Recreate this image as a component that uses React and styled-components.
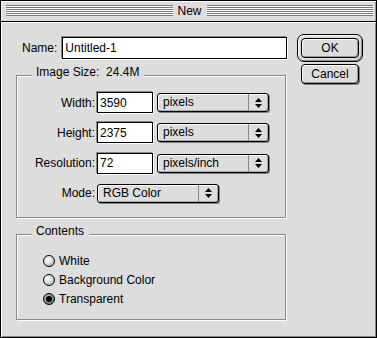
import React from 'react';
import styled, { createGlobalStyle } from 'styled-components';

const Global = createGlobalStyle`
  html, body { margin: 0; padding: 0; background: #dddddd; }
  body { font-family: "Liberation Sans", Arial, sans-serif; font-size: 12px; color: #000; }
  * { box-sizing: border-box; }
`;

const Window = styled.div`
  width: 377px;
  height: 338px;
  border: 1px solid #000;
  background: #dddddd;
  display: flex;
  flex-direction: column;
`;

const TitleBar = styled.div`
  flex: none;
  height: 21px;
  border-bottom: 1px solid #000;
  display: flex;
  align-items: flex-start;
  padding: 0 3px 0 5px;
  background: #dddddd;
  box-shadow: inset 1px 1px 0 #fff, inset -1px 0 0 #999;
`;

const Stripes = styled.div`
  flex: 1;
  height: 11px;
  margin-top: 4px;
  background: repeating-linear-gradient(to bottom, #7a7a7a 0 1px, #ffffff 1px 2px);
`;

const Title = styled.div`
  padding: 0 5px;
  line-height: 20px;
  font-size: 12px;
`;

const Body = styled.div`
  flex: 1;
  display: flex;
  align-items: flex-start;
  gap: 10px;
  padding: 0 13px 0 15px;
  box-shadow: inset 1px 1px 0 #fff, inset -1px -1px 0 #888;
`;

const LeftColumn = styled.div`
  width: 271px;
  margin-top: 15px;
  display: flex;
  flex-direction: column;
`;

const RightColumn = styled.div`
  margin-top: 12px;
  display: flex;
  flex-direction: column;
  align-items: flex-start;
  gap: 2px;
`;

const NameRow = styled.div`
  display: flex;
  align-items: center;
  gap: 5px;
  padding-left: 6px;
`;

const Label = styled.label`
  white-space: nowrap;
`;

const TextInput = styled.input`
  flex: ${p => (p.$grow ? 1 : 'none')};
  width: ${p => (p.$grow ? 'auto' : '56px')};
  min-width: 0;
  height: ${p => p.$h || 21}px;
  border: 1px solid #000;
  background: #fff;
  font: 12px "Liberation Sans", Arial, sans-serif;
  color: #000;
  padding: 0 2px;
  outline: none;
  box-shadow: -1px -1px 0 #888, 1px 1px 0 #fff;
`;

const Group = styled.div`
  width: 270px;
  margin-top: 16px;
  border: 1px solid #888;
  box-shadow: inset 1px 1px 0 #fff, 1px 1px 0 #fff;
  padding-bottom: ${p => p.$pb}px;
`;

const Legend = styled.div`
  width: fit-content;
  height: 14px;
  line-height: 14px;
  margin: -11px 0 0 15px;
  padding: 0 5px 0 4px;
  background: #dddddd;
  white-space: pre;
`;

const FieldGrid = styled.div`
  margin-top: 13px;
  display: grid;
  grid-template-columns: 80px 60px 113px;
  grid-auto-rows: 21px;
  row-gap: 9.33px;
  align-items: center;
`;

const FieldLabel = styled.label`
  text-align: right;
  padding-right: 2px;
`;

const Popup = styled.div`
  grid-column: ${p => p.$span || 'auto'};
  width: ${p => p.$w}px;
  height: 19px;
  display: flex;
  border: 1px solid #000;
  border-radius: 3px;
  background: #dddddd;
  box-shadow: 1px 1px 0 #808080, inset 1px 1px 0 #fff, inset -1px -1px 0 #aaa;
`;

const PopupText = styled.span`
  flex: 1;
  padding-left: 5px;
  line-height: 17px;
`;

const PopupArrows = styled.span`
  width: 20px;
  border-left: 1px solid #888;
  display: flex;
  align-items: center;
  justify-content: center;
`;

const RadioList = styled.div`
  margin-top: 13.5px;
  padding-left: 26px;
  display: flex;
  flex-direction: column;
`;

const RadioRow = styled.label`
  height: 19px;
  display: flex;
  align-items: center;
  gap: 4px;
`;

const RadioDot = styled.span`
  width: 12px;
  height: 12px;
  border-radius: 50%;
  border: 1px solid #000;
  background: ${p => (p.$checked
    ? 'radial-gradient(circle at 35% 35%, #bbb 0, #888 60%, #666 100%)'
    : 'radial-gradient(circle at 35% 35%, #fff 0, #ddd 45%, #999 100%)')};
  display: flex;
  align-items: center;
  justify-content: center;
  &::after {
    content: '';
    display: ${p => (p.$checked ? 'block' : 'none')};
    width: 6px;
    height: 6px;
    border-radius: 50%;
    background: #000;
  }
`;

const DefaultRing = styled.div`
  width: 66px;
  height: 28px;
  padding: 3px;
  border: 1px solid #000;
  border-radius: 7px;
  background: #dddddd;
  box-shadow: inset 1px 1px 0 #fff, inset -1px -1px 0 #888;
  display: flex;
`;

const Button = styled.button`
  width: 58px;
  height: 20px;
  margin-left: ${p => (p.$inset ? '4px' : '0')};
  padding: 0;
  border: 1px solid #000;
  border-radius: 4px;
  background: #dddddd;
  font: 12px "Liberation Sans", Arial, sans-serif;
  color: #000;
  box-shadow: ${p => (p.$shadow ? '1px 1px 0 #808080, ' : '')}inset 1px 1px 0 #fff, inset -1px -1px 0 #999;
`;

const Arrows = () => (
  <svg width="7" height="10" viewBox="0 0 7 10">
    <polygon points="3.5,0 7,4 0,4" fill="#000" />
    <polygon points="0,6 7,6 3.5,10" fill="#000" />
  </svg>
);

const Select = ({ value, w, span }) => (
  <Popup $w={w} $span={span}>
    <PopupText>{value}</PopupText>
    <PopupArrows><Arrows /></PopupArrows>
  </Popup>
);

const fields = [
  { label: 'Width:', value: '3590', unit: 'pixels' },
  { label: 'Height:', value: '2375', unit: 'pixels' },
  { label: 'Resolution:', value: '72', unit: 'pixels/inch' },
];

const radios = [
  { label: 'White', checked: false },
  { label: 'Background Color', checked: false },
  { label: 'Transparent', checked: true },
];

export default function App() {
  return (
    <>
      <Global />
      <Window>
        <TitleBar>
          <Stripes />
          <Title>New</Title>
          <Stripes />
        </TitleBar>
        <Body>
          <LeftColumn>
            <NameRow>
              <Label>Name:</Label>
              <TextInput $grow $h={22} defaultValue="Untitled-1" />
            </NameRow>
            <Group $pb={13}>
              <Legend>{'Image Size:  24.4M'}</Legend>
              <FieldGrid>
                {fields.map(f => (
                  <React.Fragment key={f.label}>
                    <FieldLabel>{f.label}</FieldLabel>
                    <TextInput defaultValue={f.value} />
                    <Select value={f.unit} w={112} />
                  </React.Fragment>
                ))}
                <FieldLabel>Mode:</FieldLabel>
                <Select value="RGB Color" w={122} span="2 / span 2" />
              </FieldGrid>
            </Group>
            <Group $pb={10.5}>
              <Legend>Contents</Legend>
              <RadioList>
                {radios.map(r => (
                  <RadioRow key={r.label}>
                    <RadioDot $checked={r.checked} />
                    {r.label}
                  </RadioRow>
                ))}
              </RadioList>
            </Group>
          </LeftColumn>
          <RightColumn>
            <DefaultRing>
              <Button>OK</Button>
            </DefaultRing>
            <Button $inset $shadow>Cancel</Button>
          </RightColumn>
        </Body>
      </Window>
    </>
  );
}
